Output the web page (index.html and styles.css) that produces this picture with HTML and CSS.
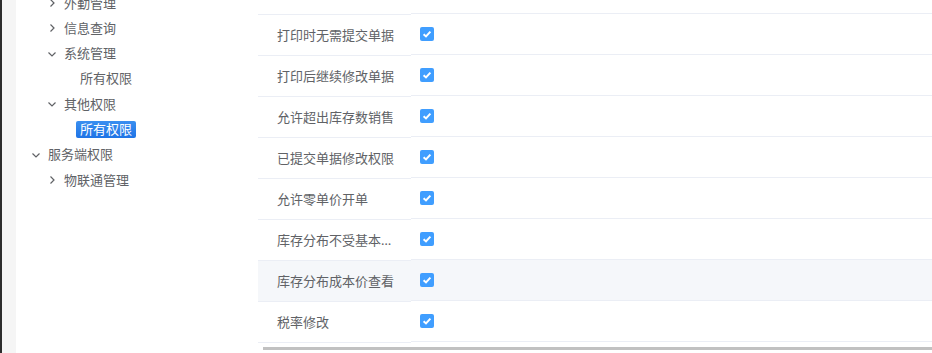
FILE: index.html
```html
<!DOCTYPE html>
<html lang="zh-CN">
<head>
  <meta charset="UTF-8">
  <meta name="viewport" content="width=device-width, initial-scale=1.0">
  <title>权限设置</title>
  <link rel="stylesheet" href="styles.css">
</head>
<body>
  <div class="app">
    <div class="edge"></div>
    <div class="gutter"></div>

    <!-- 权限树 -->
    <aside class="tree-panel">
      <ul class="tree">
        <li class="node lv2"><span class="arrow"><svg width="8" height="8" viewBox="0 0 8 8"><path d="M2.5 0.5 L6 4 L2.5 7.5" /></svg></span><span class="label">外勤管理</span></li>
        <li class="node lv2"><span class="arrow"><svg width="8" height="8" viewBox="0 0 8 8"><path d="M2.5 0.5 L6 4 L2.5 7.5" /></svg></span><span class="label">信息查询</span></li>
        <li class="node lv2"><span class="arrow"><svg width="8" height="8" viewBox="0 0 8 8"><path d="M0.5 2.5 L4 6 L7.5 2.5" /></svg></span><span class="label">系统管理</span></li>
        <li class="node lv3"><span class="arrow"></span><span class="label">所有权限</span></li>
        <li class="node lv2"><span class="arrow"><svg width="8" height="8" viewBox="0 0 8 8"><path d="M0.5 2.5 L4 6 L7.5 2.5" /></svg></span><span class="label">其他权限</span></li>
        <li class="node lv3"><span class="arrow"></span><span class="label selected">所有权限</span></li>
        <li class="node lv1"><span class="arrow"><svg width="8" height="8" viewBox="0 0 8 8"><path d="M0.5 2.5 L4 6 L7.5 2.5" /></svg></span><span class="label">服务端权限</span></li>
        <li class="node lv2"><span class="arrow"><svg width="8" height="8" viewBox="0 0 8 8"><path d="M2.5 0.5 L6 4 L2.5 7.5" /></svg></span><span class="label">物联通管理</span></li>
      </ul>
    </aside>

    <!-- 权限表格 -->
    <section class="grid-panel">
      <div class="grid">
        <div class="col-fixed">
          <div class="row-top"></div>
          <div class="cell name">打印时无需提交单据</div>
          <div class="cell name">打印后继续修改单据</div>
          <div class="cell name">允许超出库存数销售</div>
          <div class="cell name">已提交单据修改权限</div>
          <div class="cell name">允许零单价开单</div>
          <div class="cell name">库存分布不受基本资料权限控制</div>
          <div class="cell name hover">库存分布成本价查看</div>
          <div class="cell name">税率修改</div>
        </div>
        <div class="col-main">
          <div class="row-top"></div>
          <div class="cell"><span class="checkbox"><svg width="14" height="14" viewBox="0 0 14 14"><path d="M3.6 7.2 L6 9.4 L10.4 4.6" /></svg></span></div>
          <div class="cell"><span class="checkbox"><svg width="14" height="14" viewBox="0 0 14 14"><path d="M3.6 7.2 L6 9.4 L10.4 4.6" /></svg></span></div>
          <div class="cell"><span class="checkbox"><svg width="14" height="14" viewBox="0 0 14 14"><path d="M3.6 7.2 L6 9.4 L10.4 4.6" /></svg></span></div>
          <div class="cell"><span class="checkbox"><svg width="14" height="14" viewBox="0 0 14 14"><path d="M3.6 7.2 L6 9.4 L10.4 4.6" /></svg></span></div>
          <div class="cell"><span class="checkbox"><svg width="14" height="14" viewBox="0 0 14 14"><path d="M3.6 7.2 L6 9.4 L10.4 4.6" /></svg></span></div>
          <div class="cell"><span class="checkbox"><svg width="14" height="14" viewBox="0 0 14 14"><path d="M3.6 7.2 L6 9.4 L10.4 4.6" /></svg></span></div>
          <div class="cell hover"><span class="checkbox"><svg width="14" height="14" viewBox="0 0 14 14"><path d="M3.6 7.2 L6 9.4 L10.4 4.6" /></svg></span></div>
          <div class="cell"><span class="checkbox"><svg width="14" height="14" viewBox="0 0 14 14"><path d="M3.6 7.2 L6 9.4 L10.4 4.6" /></svg></span></div>
        </div>
      </div>
      <div class="scrollbar"></div>
    </section>
  </div>
</body>
</html>
```

FILE: styles.css
```css
html,
body {
  margin: 0;
  padding: 0;
  height: 353px;
  overflow: hidden;
  background: #fff;
}

body {
  font-family: "Noto Sans", "Noto Sans CJK SC", sans-serif;
  font-size: 13px;
  color: #606266;
}

.app {
  display: flex;
  height: 353px;
}

.edge {
  width: 2px;
  background: #2d2d2d;
}

.gutter {
  width: 14px;
  background: #f5f5f5;
}

/* tree */
.tree-panel {
  width: 242px;
  background: #fff;
}

.tree {
  list-style: none;
  margin: -9.65px 0 0 0;
  padding: 0;
}

.tree .node {
  display: flex;
  align-items: center;
  height: 25.3px;
}

.tree .lv1 { padding-left: 12px; }
.tree .lv2 { padding-left: 28px; }
.tree .lv3 { padding-left: 44px; }

.tree .arrow {
  width: 16px;
  height: 16px;
  display: flex;
  align-items: center;
  justify-content: center;
}

.tree .arrow svg path {
  fill: none;
  stroke: #606266;
  stroke-width: 1.2;
}

.tree .label {
  display: inline-block;
  line-height: 17px;
  padding: 0 4px;
  border-radius: 2px;
  white-space: nowrap;
}

.tree .label.selected {
  background: linear-gradient(#3a8ff0, #1f74e6);
  color: #fff;
}

/* table */
.grid-panel {
  flex: 1;
  display: flex;
  flex-direction: column;
}

.grid {
  display: flex;
}

.col-fixed {
  width: 153px;
  margin-top: 1px;
}

.col-main {
  flex: 1;
}

.row-top {
  height: 13px;
  border-bottom: 1px solid #ebeef5;
}

.cell {
  height: 40px;
  border-bottom: 1px solid #ebeef5;
  display: flex;
  align-items: center;
  padding-left: 9px;
}

.cell.name {
  display: block;
  line-height: 40px;
  padding: 0 10px 0 19px;
  white-space: nowrap;
  overflow: hidden;
  text-overflow: ellipsis;
}

.cell.hover {
  background: #f5f7fa;
}

.checkbox {
  width: 14px;
  height: 14px;
  border-radius: 2px;
  background: #409eff;
  display: block;
}

.checkbox svg {
  display: block;
}

.checkbox svg path {
  fill: none;
  stroke: #fff;
  stroke-width: 2;
}

.scrollbar {
  margin: 4px 0 0 5px;
  height: 3px;
  background: #c1c1c1;
}
```
